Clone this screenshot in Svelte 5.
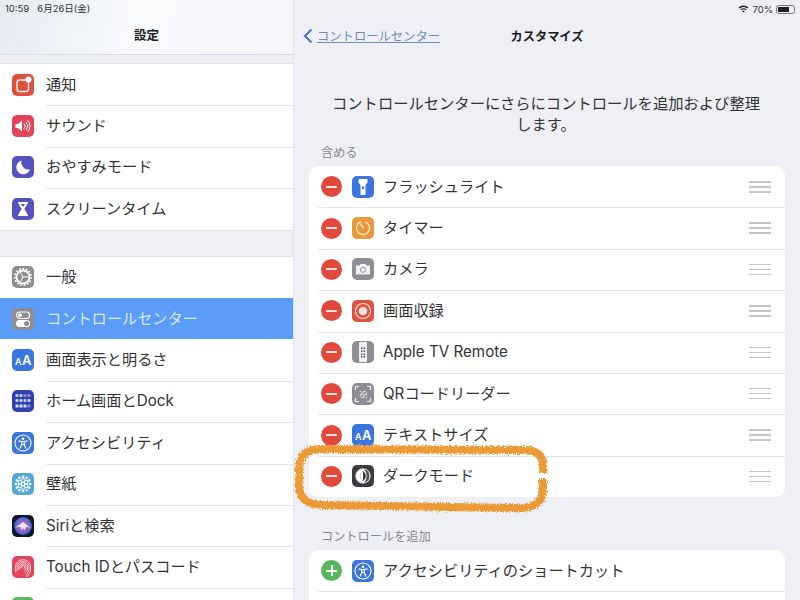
<script>
  const generalTop = [
    { label: "通知", icon: "notify", bg: "#e0503f" },
    { label: "サウンド", icon: "sound", bg: "#e2445c" },
    { label: "おやすみモード", icon: "moon", bg: "#5552c0" },
    { label: "スクリーンタイム", icon: "hourglass", bg: "#5552c0" }
  ];
  const generalBottom = [
    { label: "一般", icon: "gear", bg: "#8e8e92" },
    { label: "コントロールセンター", icon: "toggles", bg: "#8e8e92", active: true },
    { label: "画面表示と明るさ", icon: "aa", bg: "#3b76e0" },
    { label: "ホーム画面とDock", icon: "dock", bg: "#2f43b0" },
    { label: "アクセシビリティ", icon: "access", bg: "#3b76e0" },
    { label: "壁紙", icon: "flower", bg: "#55a7d6" },
    { label: "Siriと検索", icon: "siri", bg: "#14142c" },
    { label: "Touch IDとパスコード", icon: "finger", bg: "#e2465c" },
    { label: "", icon: "none", bg: "#5cb85f" }
  ];
  const included = [
    { label: "フラッシュライト", icon: "flash", bg: "#3b76e0" },
    { label: "タイマー", icon: "timer", bg: "#e8993d" },
    { label: "カメラ", icon: "camera", bg: "#8e8e92" },
    { label: "画面収録", icon: "record", bg: "#e0503f" },
    { label: "Apple TV Remote", icon: "remote", bg: "#8e8e92" },
    { label: "QRコードリーダー", icon: "qr", bg: "#8e8e92" },
    { label: "テキストサイズ", icon: "aa", bg: "#3b76e0" },
    { label: "ダークモード", icon: "dark", bg: "#3c3c40" }
  ];
  const more = [{ label: "アクセシビリティのショートカット", icon: "access", bg: "#3b76e0" }];
  const petals = [0, 60, 120, 180, 240, 300];
  const outer = [0, 30, 60, 90, 120, 150, 180, 210, 240, 270, 300, 330];
  const qrDots = [8, 9.5, 11, 12.5, 14];
</script>

{#snippet glyph(name)}
  <svg viewBox="0 0 22 22" width="22" height="22">
    {#if name === "notify"}
      <rect x="5" y="6" width="11.5" height="11.5" rx="2.5" fill="none" stroke="#fff" stroke-width="1.3" />
      <circle cx="16.5" cy="5.5" r="3" fill="#fff" />
    {:else if name === "sound"}
      <path d="M3.5 9h2.500l4-3.500v11L6 13H3.500z" fill="#fff" />
      <path d="M12 8.500a3.500 3.500 0 0 1 0 5M14 7a6 6 0 0 1 0 8M16 5.500a8.500 8.500 0 0 1 0 11" fill="none" stroke="#fff" stroke-width="1" />
    {:else if name === "moon"}
      <path d="M9.500 4.500a7 7 0 1 0 8.500 9a7.500 7.500 0 0 1-8.500-9z" fill="#fff" />
    {:else if name === "hourglass"}
      <path d="M6 4h10v1.500h-1c0 3-2.500 4-2.500 5.500s2.500 2.500 2.500 5.500h1V18H6v-1.500h1c0-3 2.500-4 2.500-5.500S7 8.500 7 5.500H6z" fill="#fff" />
      <path d="M9 6h4l-2 3z" fill="#5552c0" />
    {:else if name === "gear"}
      <circle cx="11" cy="11" r="6.5" fill="none" stroke="#fff" stroke-width="1.8" />
      <circle cx="11" cy="11" r="8.2" fill="none" stroke="#fff" stroke-width="1.6" stroke-dasharray="1.8 1.63" />
      <path d="M11 11L8 5.500M11 11h6M11 11l-3 5.500" stroke="#fff" stroke-width="1" />
    {:else if name === "toggles"}
      <rect x="4.5" y="4" width="13" height="6.5" rx="3.25" fill="none" stroke="#fff" stroke-width="1.2" />
      <circle cx="8" cy="7.25" r="2" fill="#fff" />
      <rect x="4" y="12" width="14" height="7" rx="3.5" fill="#fff" />
      <circle cx="14.5" cy="15.5" r="2.5" fill="#8e8e92" />
    {:else if name === "aa"}
      <text x="3" y="16" class="aa-small">A</text>
      <text x="10" y="16" class="aa-big">A</text>
    {:else if name === "dock"}
      {#each [3.5, 7.5, 11.5, 15.5] as x}
        {#each [4, 9] as y}
          <rect x={x} y={y} width="3" height="3" rx="1" fill={x > 10 && y < 6 ? "#a77be0" : "#c9d0ff"} />
        {/each}
        <rect x={x} y="14.5" width="3" height="3" rx="0.5" fill={x > 14 ? "#8f7fe0" : "#d8e4ff"} />
      {/each}
    {:else if name === "access"}
      <circle cx="11" cy="11" r="8" fill="none" stroke="#fff" stroke-width="1.1" />
      <circle cx="11" cy="6.8" r="1.3" fill="#fff" />
      <path d="M6.500 8.800l3.200.7v3l-1.500 4M15.500 8.800l-3.200.7v3l1.500 4M9.700 9.500h2.600M9.700 12.500h2.600" fill="none" stroke="#fff" stroke-width="1.2" />
    {:else if name === "flower"}
      <circle cx="11" cy="11" r="1.7" fill="none" stroke="#fff" stroke-width="0.9" />
      {#each petals as a}
        <circle cx="11" cy="7.4" r="1.8" fill="none" stroke="#fff" stroke-width="0.9" transform="rotate({a} 11 11)" />
      {/each}
      {#each outer as a}
        <circle cx="11" cy="3.9" r="1.3" fill="#eef7fc" transform="rotate({a} 11 11)" />
      {/each}
    {:else if name === "siri"}
      <defs>
        <radialGradient id="siri-ball" cx="0.5" cy="0.5" r="0.6">
          <stop offset="0" stop-color="#e8e4f8" />
          <stop offset="0.4" stop-color="#b05cc0" />
          <stop offset="0.75" stop-color="#3f6fd0" />
          <stop offset="1" stop-color="#1c1c40" />
        </radialGradient>
      </defs>
      <circle cx="11" cy="11" r="9" fill="url(#siri-ball)" />
      <path d="M3 12.500l5-3 3-2.500 3 2.500 5 3.500-5-1.500-1.500 4-1.500-3.500-1.500 3.500-1-4z" fill="#e8ecff" />
    {:else if name === "finger"}
      {#each [1.5, 3, 4.5, 6, 7.5] as r}
        <path d="M{11 - r} 11a{r} {r} 0 0 1 {r * 2} 0v{r * 0.5}a{r} {r} 0 0 1-{r * 0.6} {r * 0.8}M{11 - r} 11v{r * 0.7}" fill="none" stroke="#fde6ea" stroke-width="0.8" />
      {/each}
    {:else if name === "flash"}
      <path d="M6.500 3h9v3.500l-2 2.500v10h-5v-10l-2-2.500z" fill="#fff" />
      <rect x="10" y="10.5" width="2" height="2.5" fill="#3b76e0" />
    {:else if name === "timer"}
      <circle cx="11" cy="11" r="6.5" fill="none" stroke="#fbe6c4" stroke-width="1.3" stroke-dasharray="36 5" transform="rotate(-70 11 11)" />
      <path d="M8 6.500l3.500 4.500" stroke="#fbe6c4" stroke-width="1.3" />
    {:else if name === "camera"}
      <path d="M4 7.500h3.500l1-1.500h5l1 1.500H18v9H4z" fill="#f0f0f2" />
      <circle cx="11" cy="11.8" r="2.6" fill="none" stroke="#8e8e92" stroke-width="0.9" />
    {:else if name === "record"}
      <circle cx="11" cy="11" r="7.5" fill="none" stroke="#fbe3df" stroke-width="1.2" />
      <circle cx="11" cy="11" r="4.3" fill="#fbe3df" />
    {:else if name === "remote"}
      <rect x="7" y="1" width="8" height="20" rx="0.5" fill="#f0f0f2" />
      {#each [6.5, 9.5, 12.5, 15] as y}
        <rect x="9" y={y} width="1.5" height="1.5" fill="#555" />
        <rect x="11.5" y={y} width="1.5" height="1.5" fill="#555" />
      {/each}
    {:else if name === "qr"}
      <path d="M3.500 7V3.500H7M15 3.500h3.500V7M18.500 15v3.500H15M7 18.500H3.500V15" fill="none" stroke="#eee" stroke-width="1.2" />
      {#each qrDots as x, i}
        {#each qrDots as y, j}
          {#if (i + j) % 3 !== 1}
            <rect x={x - 0.1} y={y - 0.1} width="1.2" height="1.2" fill="#e8e8ea" />
          {/if}
        {/each}
      {/each}
    {:else if name === "dark"}
      <circle cx="11" cy="11" r="7.3" fill="#fff" />
      <path d="M11.500 3.800a7.300 7.300 0 0 1 0 14.400c2-1.700 3-4.300 3-7.200s-1-5.500-3-7.200z" fill="#55555a" />
      <path d="M11 6c1.700 1 2.800 3 2.800 5s-1.100 4-2.800 5c-1.700-1-2.800-3-2.800-5s1.100-4 2.800-5z" fill="#3c3c40" />
      <path d="M11 6c-1.700 1-2.800 3-2.800 5s1.100 4 2.800 5z" fill="#fff" />
      <circle cx="11" cy="11" r="7.3" fill="none" stroke="#ddd" stroke-width="0.8" />
    {/if}
  </svg>
{/snippet}

{#snippet settingsRows(rows)}
  {#each rows as row}
    <div class="side-row" class:active={row.active}>
      <span class="icon" style="background: {row.bg}">{@render glyph(row.icon)}</span>
      {#if row.label}
        <span class="side-label">{row.label}</span>
      {/if}
    </div>
  {/each}
{/snippet}

{#snippet controlRows(rows, added)}
  {#each rows as row}
    <div class="control">
      <span class="round" class:add={added}></span>
      <span class="icon" style="background: {row.bg}">{@render glyph(row.icon)}</span>
      <span class="control-label">{row.label}</span>
      {#if !added}
        <span class="grip"><i></i><i></i><i></i></span>
      {/if}
    </div>
  {/each}
{/snippet}

<div class="ipad">
  <aside class="sidebar">
    <header class="side-head">
      <div class="status">10:59&nbsp;&nbsp; 6月26日(金)</div>
      <h1>設定</h1>
    </header>
    <div class="side-group first">{@render settingsRows(generalTop)}</div>
    <div class="side-group second">{@render settingsRows(generalBottom)}</div>
  </aside>

  <main class="main">
    <div class="status right">
      <svg viewBox="0 0 12 9" width="11" height="8">
        <path d="M6 8.500L4.500 7a2 2 0 0 1 3 0zM3.500 6L2.500 5a5 5 0 0 1 7 0l-1 1a3.600 3.600 0 0 0-5 0zM1.500 4L.3 3a8 8 0 0 1 11.400 0l-1.200 1a6.500 6.500 0 0 0-9 0z" fill="#222" />
      </svg>
      <span>70%</span>
      <span class="battery"><b></b></span>
    </div>
    <nav class="nav">
      <a class="back" href="#back">
        <svg viewBox="0 0 10 16" width="10" height="16">
          <path d="M8.500 1.500L2 8l6.500 6.500" fill="none" stroke="#4a78c8" stroke-width="2.2" />
        </svg>
        <span>コントロールセンター</span>
      </a>
      <h2>カスタマイズ</h2>
    </nav>
    <p class="intro">コントロールセンターにさらにコントロールを追加および整理します。</p>
    <h3>含める</h3>
    <section class="group">{@render controlRows(included, false)}</section>
    <h3 class="more">コントロールを追加</h3>
    <section class="group tail">{@render controlRows(more, true)}</section>
  </main>

  <svg class="scribble" viewBox="0 0 270 80" width="270" height="80">
    <defs>
      <filter id="rough" x="-5%" y="-15%" width="110%" height="130%">
        <feTurbulence type="fractalNoise" baseFrequency="0.9" numOctaves="2" seed="4" />
        <feDisplacementMap in="SourceGraphic" scale="6" />
      </filter>
    </defs>
    <path
      d="M250 31V24C250 13 244 8 230 8L28 7C13 7 6 14 6 28V44C6 57 15 63 30 63L228 66C244 66 250 58 250 46V37"
      fill="none"
      stroke="#ec9a35"
      stroke-width="8"
      filter="url(#rough)"
    />
  </svg>
</div>

<style>
  :global(body) {
    overflow: hidden;
    background: #eff0f5;
  }

  .ipad {
    position: relative;
    display: flex;
    width: 800px;
    height: 600px;
    overflow: hidden;
    color: #333;
    font-family: Inter, "Noto Sans CJK JP", sans-serif;
    background: #eff0f5;
  }

  .sidebar {
    flex: 0 0 294px;
    box-sizing: border-box;
    border-right: 1px solid #e2e3e8;
  }

  .side-head {
    height: 55px;
    box-sizing: border-box;
    border-bottom: 1px solid #dcdde1;
    background: linear-gradient(100deg, #e6ebf2, #f8fafc 45%, #f5f6fa);
  }

  .status {
    padding: 2px 5px 0;
    height: 14px;
    font-size: 9.5px;
    line-height: 13px;
    color: #333;
  }

  .status.right {
    display: flex;
    justify-content: flex-end;
    align-items: center;
    gap: 3px;
    padding-right: 5px;
  }

  .battery {
    position: relative;
    box-sizing: border-box;
    width: 19px;
    height: 9px;
    border: 1px solid #777;
    border-radius: 2.5px;
    padding: 1px;
  }

  .battery b {
    display: block;
    width: 70%;
    height: 100%;
    background: #222;
  }

  h1 {
    margin: 8px 0 0;
    text-align: center;
    font-size: 12.5px;
    line-height: 24px;
    font-weight: 600;
    color: #222;
  }

  .side-group {
    background: #fff;
    box-shadow: 0 -1px 0 #e2e3e8;
  }

  .side-group.first {
    margin-top: 9px;
    box-shadow: 0 -1px 0 #e2e3e8, 0 1px 0 #e2e3e8;
  }

  .side-group.second {
    margin-top: 27px;
  }

  .side-row {
    position: relative;
    display: flex;
    align-items: center;
    height: 41.4px;
    padding-left: 12px;
    font-size: 15.2px;
  }

  .side-row + .side-row::before {
    content: "";
    position: absolute;
    left: 46px;
    right: 0;
    top: 0;
    height: 1px;
    background: #e6e6e9;
  }

  .side-row.active {
    background: #5a9cf8;
    color: #dbe9fc;
  }

  .side-row.active::before,
  .side-row.active + .side-row::before {
    display: none;
  }

  .side-label {
    margin-left: 12px;
    line-height: 20px;
  }

  .icon {
    display: block;
    flex: none;
    width: 22px;
    height: 22px;
    border-radius: 5px;
    overflow: hidden;
  }

  .icon svg {
    display: block;
  }

  .aa-small {
    font-size: 9px;
    font-weight: 600;
    fill: #fff;
  }

  .aa-big {
    font-size: 13px;
    font-weight: 600;
    fill: #fff;
  }

  .main {
    flex: 1;
    min-width: 0;
  }

  .nav {
    position: relative;
    display: flex;
    justify-content: center;
    align-items: center;
    height: 39px;
  }

  .nav h2 {
    margin: 0;
    font-size: 12.2px;
    font-weight: 600;
    color: #1c1c1e;
  }

  .back {
    position: absolute;
    left: 9px;
    top: 11px;
    display: flex;
    align-items: center;
    gap: 4px;
    font-size: 12.3px;
    color: #6c8cc0;
    text-decoration: underline;
  }

  .intro {
    margin: 38px 0 0;
    padding: 0 37px 0 35px;
    text-align: center;
    font-size: 15.3px;
    line-height: 21px;
    color: #333;
  }

  h3 {
    margin: 9px 0 0;
    padding-left: 27px;
    height: 22px;
    font-size: 12.2px;
    line-height: 17px;
    font-weight: 400;
    color: #8a8a8e;
  }

  h3.more {
    margin-top: 31px;
  }

  .group {
    margin: 0 15px;
    background: #fff;
    border-radius: 9px;
    overflow: hidden;
  }

  .group.tail {
    height: 60px;
  }

  .control {
    position: relative;
    display: flex;
    align-items: center;
    height: 41.4px;
    padding-left: 12px;
    font-size: 15.2px;
  }

  .control + .control::before,
  .group.tail .control::after {
    content: "";
    position: absolute;
    left: 9px;
    right: 0;
    top: 0;
    height: 1px;
    background: #e6e6e9;
  }

  .group.tail .control::after {
    top: auto;
    bottom: 0;
  }

  .round {
    position: relative;
    flex: none;
    width: 21px;
    height: 21px;
    margin-right: 10px;
    border-radius: 50%;
    background: #e2483c;
  }

  .round::after {
    content: "";
    position: absolute;
    left: 5px;
    right: 5px;
    top: 9.5px;
    height: 2px;
    background: #fbe3df;
  }

  .round.add {
    background: #56b85a;
  }

  .round.add::before {
    content: "";
    position: absolute;
    top: 5px;
    bottom: 5px;
    left: 9.5px;
    width: 2px;
    background: #fff;
  }

  .round.add::after {
    background: #fff;
  }

  .control-label {
    margin-left: 9px;
    line-height: 20px;
  }

  .grip {
    position: absolute;
    right: 14px;
    top: 15px;
    display: flex;
    flex-direction: column;
    gap: 3.5px;
    width: 22px;
  }

  .grip i {
    display: block;
    height: 1.5px;
    background: #c6c6c8;
  }

  .scribble {
    position: absolute;
    left: 293px;
    top: 442px;
  }
</style>
